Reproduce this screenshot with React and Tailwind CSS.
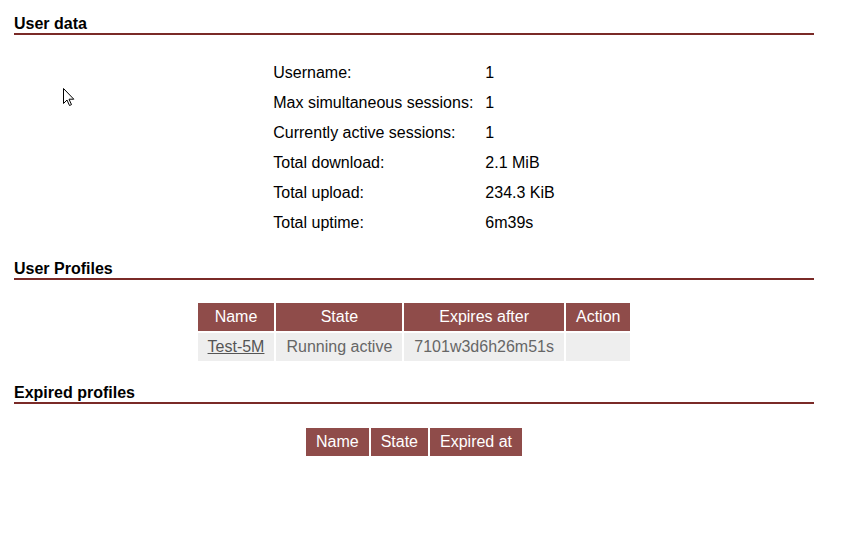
import React from "react";

const infoRows = [
  ["Username:", "1"],
  ["Max simultaneous sessions:", "1"],
  ["Currently active sessions:", "1"],
  ["Total download:", "2.1 MiB"],
  ["Total upload:", "234.3 KiB"],
  ["Total uptime:", "6m39s"],
];

function Heading({ children, className = "" }) {
  return (
    <div className={"font-bold border-b-2 border-[#7a2a27] leading-[18px] " + className}>
      {children}
    </div>
  );
}

export default function App() {
  return (
    <div className="relative w-[845px] h-[540px] bg-white text-black text-[16px] leading-[18px] font-['Liberation_Sans',Arial,sans-serif]">
      <div className="ml-[14px] w-[800px] pt-[15px]">
        <Heading>User data</Heading>
        <table className="mx-auto mt-[22px] border-separate border-spacing-[2px]">
          <tbody>
            {infoRows.map(([k, v]) => (
              <tr key={k}>
                <td className="p-[5px] text-left whitespace-nowrap">{k}</td>
                <td className="p-[5px] text-left whitespace-nowrap">{v}</td>
              </tr>
            ))}
          </tbody>
        </table>

        <Heading className="mt-[21px]">User Profiles</Heading>
        <table className="mx-auto mt-[21px] border-separate border-spacing-[2px]">
          <thead>
            <tr>
              {["Name", "State", "Expires after", "Action"].map((h) => (
                <th key={h} className="px-[10px] py-[5px] font-normal text-white bg-[#8f4c4a] whitespace-nowrap">
                  {h}
                </th>
              ))}
            </tr>
          </thead>
          <tbody>
            <tr>
              <td className="px-[10px] py-[5px] bg-[#eeeeee] text-[#555555] text-center whitespace-nowrap">
                <a href="#" className="underline text-[#555555]">Test-5M</a>
              </td>
              <td className="px-[10px] py-[5px] bg-[#eeeeee] text-[#666666] text-center whitespace-nowrap">Running active</td>
              <td className="px-[10px] py-[5px] bg-[#eeeeee] text-[#666666] text-center whitespace-nowrap">7101w3d6h26m51s</td>
              <td className="px-[10px] py-[5px] bg-[#eeeeee]"></td>
            </tr>
          </tbody>
        </table>

        <Heading className="mt-[21px]">Expired profiles</Heading>
        <table className="mx-auto mt-[22px] border-separate border-spacing-[2px]">
          <thead>
            <tr>
              {["Name", "State", "Expired at"].map((h) => (
                <th key={h} className="px-[10px] py-[5px] font-normal text-white bg-[#8f4c4a] whitespace-nowrap">
                  {h}
                </th>
              ))}
            </tr>
          </thead>
        </table>
      </div>

      <svg className="absolute left-[63px] top-[88px]" width="12" height="19" viewBox="0 0 12 19">
        <path
          d="M0.5 0.5 L0.5 15.5 L4 12 L6.5 17.5 L8.5 16.6 L6 11.2 L10.8 11.2 Z"
          fill="white"
          stroke="black"
          strokeWidth="1"
          strokeLinejoin="miter"
        />
      </svg>
    </div>
  );
}
